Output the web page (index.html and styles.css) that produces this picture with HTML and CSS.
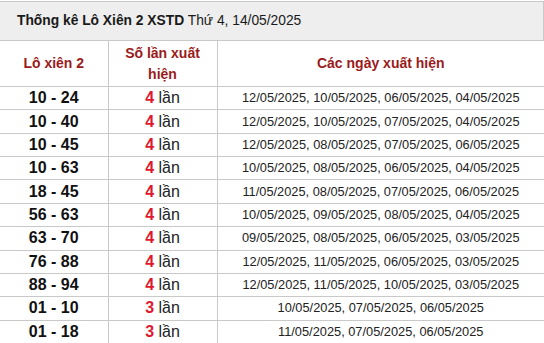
FILE: index.html
```html
<!DOCTYPE html>
<html lang="vi">
<head>
<meta charset="utf-8">
<title>Thống kê Lô Xiên 2 XSTD</title>
<link rel="stylesheet" href="styles.css">
</head>
<body>
<div class="box">
  <div class="title"><b>Thống kê Lô Xiên 2 XSTD</b> Thứ 4, 14/05/2025</div>
  <table class="stats">
    <colgroup><col class="c1"><col class="c2"><col class="c3"></colgroup>
    <thead>
      <tr><th>Lô xiên 2</th><th>Số lần xuất hiện</th><th>Các ngày xuất hiện</th></tr>
    </thead>
    <tbody>
      <tr><td class="pair">10 - 24</td><td class="cnt"><b>4</b> lần</td><td class="dates">12/05/2025, 10/05/2025, 06/05/2025, 04/05/2025</td></tr>
      <tr><td class="pair">10 - 40</td><td class="cnt"><b>4</b> lần</td><td class="dates">12/05/2025, 10/05/2025, 07/05/2025, 04/05/2025</td></tr>
      <tr><td class="pair">10 - 45</td><td class="cnt"><b>4</b> lần</td><td class="dates">12/05/2025, 08/05/2025, 07/05/2025, 06/05/2025</td></tr>
      <tr><td class="pair">10 - 63</td><td class="cnt"><b>4</b> lần</td><td class="dates">10/05/2025, 08/05/2025, 06/05/2025, 04/05/2025</td></tr>
      <tr><td class="pair">18 - 45</td><td class="cnt"><b>4</b> lần</td><td class="dates">11/05/2025, 08/05/2025, 07/05/2025, 06/05/2025</td></tr>
      <tr><td class="pair">56 - 63</td><td class="cnt"><b>4</b> lần</td><td class="dates">10/05/2025, 09/05/2025, 08/05/2025, 04/05/2025</td></tr>
      <tr><td class="pair">63 - 70</td><td class="cnt"><b>4</b> lần</td><td class="dates">09/05/2025, 08/05/2025, 06/05/2025, 03/05/2025</td></tr>
      <tr><td class="pair">76 - 88</td><td class="cnt"><b>4</b> lần</td><td class="dates">12/05/2025, 11/05/2025, 06/05/2025, 03/05/2025</td></tr>
      <tr><td class="pair">88 - 94</td><td class="cnt"><b>4</b> lần</td><td class="dates">12/05/2025, 11/05/2025, 10/05/2025, 03/05/2025</td></tr>
      <tr><td class="pair">01 - 10</td><td class="cnt"><b>3</b> lần</td><td class="dates">10/05/2025, 07/05/2025, 06/05/2025</td></tr>
      <tr><td class="pair">01 - 18</td><td class="cnt"><b>3</b> lần</td><td class="dates">11/05/2025, 07/05/2025, 06/05/2025</td></tr>
    </tbody>
  </table>
</div>
</body>
</html>
```
FILE: styles.css
```css
html, body {
  margin: 0;
  padding: 0;
  background: #fff;
}
body {
  font-family: "Liberation Sans", Arial, sans-serif;
  color: #1a1a1a;
  padding-top: 1px;
}
.box {
  width: 544px;
}
.title {
  box-sizing: border-box;
  height: 39px;
  background: #eeeeee;
  border-top: 1px solid #c9c9c9;
  border-right: 1px solid #c9c9c9;
  padding: 0 0 0 17px;
  font-size: 13.8px;
  line-height: 38px;
  color: #1a1a1a;
}
.title b {
  font-weight: bold;
}
.stats {
  width: 544px;
  border-collapse: collapse;
  table-layout: fixed;
}
.c1 { width: 108px; }
.c2 { width: 109px; }
.c3 { width: 327px; }
.stats th,
.stats td {
  border-top: 1px solid #c9c9c9;
  border-bottom: 1px solid #c9c9c9;
  border-left: 1px solid #c9c9c9;
  padding: 0 8px;
  text-align: center;
  vertical-align: middle;
}
.stats th:first-child,
.stats td:first-child {
  border-left: none;
}
.stats th {
  height: 45px;
  font-size: 14px;
  line-height: 21px;
  font-weight: bold;
  color: #9b1b1b;
}
.stats td {
  height: 22.36px;
  line-height: 18px;
}
.pair {
  font-size: 16px;
  font-weight: bold;
  color: #111;
}
.cnt {
  font-size: 16px;
  color: #222;
}
.cnt b {
  color: #e0182d;
}
.dates {
  font-size: 12.8px;
  color: #222;
}
```
